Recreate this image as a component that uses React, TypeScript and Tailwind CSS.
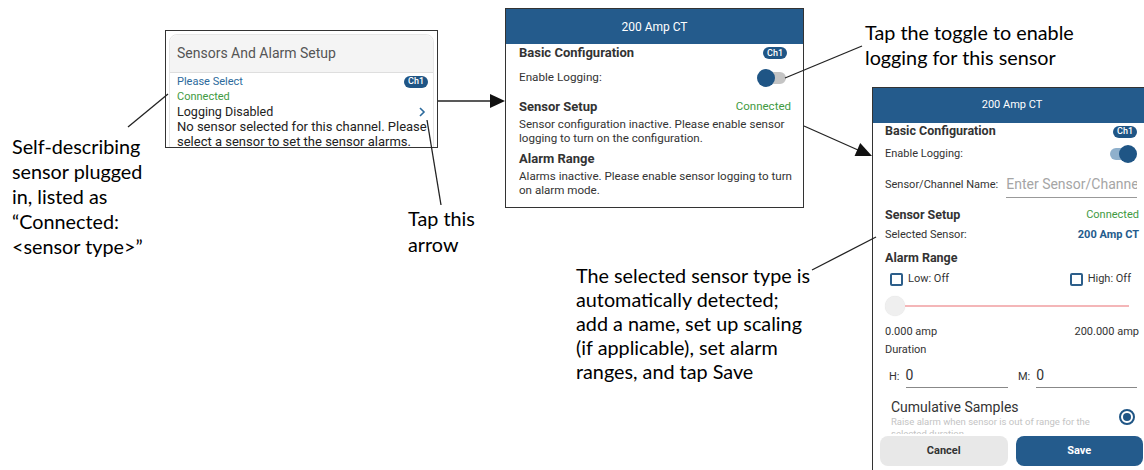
import React from 'react';

const APP = '[font-family:Roboto,sans-serif]';
const NOTE = '[font-family:Lato,sans-serif] text-[19.8px] text-black whitespace-nowrap';

const Ch1 = () => (
  <span className="flex h-[12px] w-[24px] items-center justify-center rounded-full bg-[#1f5585] text-[9px] font-medium leading-none text-white">
    Ch1
  </span>
);

const Toggle = ({ on }: { on: boolean }) => (
  <div className="relative h-[18px] w-[30px]">
    <div
      className={`absolute left-[3px] top-[3px] h-[12px] w-[26px] rounded-full ${
        on ? 'bg-[#8fb0cc]' : 'bg-[#c4c4c4]'
      }`}
    />
    <div
      className={`absolute top-0 h-[18px] w-[18px] rounded-full bg-[#1f5585] ${
        on ? 'right-0' : 'left-0'
      }`}
    />
  </div>
);

const Checkbox = ({ label }: { label: string }) => (
  <div className="flex items-center gap-[5px]">
    <span className="h-[13px] w-[13px] rounded-[2px] border-2 border-[#2c5e8a] bg-white" />
    <span className="text-[11px] text-[#333]">{label}</span>
  </div>
);

const SetupPanel = () => (
  <div className={`absolute left-[165px] top-[30px] h-[118px] w-[273px] overflow-hidden border border-[#333] bg-white ${APP}`}>
    <div className="mx-[3px] mt-[3px] h-[120px] rounded-lg border border-[#e6e6e6]">
      <div className="flex h-[38px] items-center rounded-t-lg border-b border-[#dedede] bg-[#f4f4f4] pl-[7px] text-[14px] text-[#555]">
        Sensors And Alarm Setup
      </div>
      <div className="whitespace-nowrap pl-[7px] pr-[5px] pt-[1px] leading-[15px]">
        <div className="flex h-[15px] items-center justify-between">
          <span className="text-[11px] text-[#2c6a9c]">Please Select</span>
          <Ch1 />
        </div>
        <div className="text-[11px] text-[#3f9a3f]">Connected</div>
        <div className="flex items-center justify-between text-[12.5px] text-[#222]">
          <span>Logging Disabled</span>
          <svg width="8" height="10" viewBox="0 0 8 10" className="mr-[2px]">
            <path d="M2 1 L6 5 L2 9" fill="none" stroke="#2c6a9c" strokeWidth="1.6" />
          </svg>
        </div>
        <div className="text-[13px] text-[#222]">
          No sensor selected for this channel. Please
          <br />
          select a sensor to set the sensor alarms.
        </div>
      </div>
    </div>
  </div>
);

const InactivePanel = () => (
  <div className={`absolute left-[505px] top-[8px] h-[200px] w-[299px] overflow-hidden border border-[#333] bg-white ${APP}`}>
    <div className="flex h-[35px] items-center justify-center bg-[#245b8c] text-[12px] text-white">
      200 Amp CT
    </div>
    <div className="whitespace-nowrap pl-[13px] pr-[16px] text-[#333]">
      <div className="flex h-[18px] items-center justify-between">
        <span className="text-[13px] font-bold">Basic Configuration</span>
        <Ch1 />
      </div>
      <div className="mt-[6px] flex h-[20px] items-center justify-between">
        <span className="text-[11.7px]">Enable Logging:</span>
        <Toggle on={false} />
      </div>
      <div className="mt-[10px] flex h-[18px] items-center justify-between">
        <span className="text-[13px] font-bold">Sensor Setup</span>
        <span className="-mr-[4px] text-[11.5px] text-[#3f9a3f]">Connected</span>
      </div>
      <div className="mt-[1px] text-[11.6px] leading-[14px]">
        Sensor configuration inactive. Please enable sensor
        <br />
        logging to turn on the configuration.
      </div>
      <div className="mt-[5px] flex h-[18px] items-center text-[13px] font-bold">Alarm Range</div>
      <div className="mt-[1px] text-[11.6px] leading-[14px]">
        Alarms inactive. Please enable sensor logging to turn
        <br />
        on alarm mode.
      </div>
    </div>
  </div>
);

const ConfigPanel = () => (
  <div className={`absolute left-[872px] top-[87px] h-[390px] w-[280px] overflow-hidden border border-[#333] bg-white ${APP}`}>
    <div className="flex h-[35px] items-center justify-center bg-[#245b8c] text-[11px] text-white">
      200 Amp CT
    </div>
    <div className="pl-[12px] pr-[14px] text-[#333]">
      <div className="flex h-[17px] items-center justify-between">
        <span className="text-[12.5px] font-bold">Basic Configuration</span>
        <Ch1 />
      </div>
      <div className="mt-[4px] flex h-[20px] items-center justify-between">
        <span className="text-[11px]">Enable Logging:</span>
        <Toggle on />
      </div>
      <div className="mt-[8px] flex h-[26px] items-center gap-[8px]">
        <span className="text-[11px]">Sensor/Channel Name:</span>
        <div className="flex h-[26px] min-w-0 flex-1 items-center overflow-hidden whitespace-nowrap border-b border-[#999] text-[14px] text-[#a5a5a5]">
          Enter Sensor/Channel Name
        </div>
      </div>
      <div className="mt-[9px] flex h-[16px] items-center justify-between">
        <span className="text-[12.5px] font-bold">Sensor Setup</span>
        <span className="-mr-[2px] text-[11px] text-[#3f9a3f]">Connected</span>
      </div>
      <div className="mt-[4px] flex h-[16px] items-center justify-between">
        <span className="text-[11px]">Selected Sensor:</span>
        <span className="-mr-[2px] text-[11px] font-bold text-[#245b8c]">200 Amp CT</span>
      </div>
      <div className="mt-[7px] flex h-[16px] items-center text-[12.5px] font-bold">Alarm Range</div>
      <div className="mt-[5px] flex h-[16px] items-center justify-between pl-[5px] pr-[6px]">
        <Checkbox label="Low: Off" />
        <Checkbox label="High: Off" />
      </div>
      <div className="mt-[9px] flex h-[20px] items-center pr-[8px]">
        <span className="h-[20px] w-[20px] rounded-full bg-[#efefef] shadow-[0_0_1px_rgba(0,0,0,0.15)]" />
        <span className="h-[2px] flex-1 bg-[#f4b6b8]" />
      </div>
      <div className="mt-[8px] flex h-[16px] items-center justify-between text-[11px]">
        <span>0.000 amp</span>
        <span className="-mr-[2px]">200.000 amp</span>
      </div>
      <div className="mt-[2px] flex h-[16px] items-center text-[11px]">Duration</div>
      <div className="mt-[7px] flex h-[23px] items-end gap-[10px] pl-[4px]">
        <div className="flex flex-1 items-end gap-[6px]">
          <span className="pb-[3px] text-[11px]">H:</span>
          <div className="flex-1 border-b border-[#888] pb-[1px] text-[14px]">0</div>
        </div>
        <div className="flex flex-1 items-end gap-[6px]">
          <span className="pb-[3px] text-[11px]">M:</span>
          <div className="flex-1 border-b border-[#888] pb-[1px] text-[14px]">0</div>
        </div>
      </div>
      <div className="mt-[11px] flex items-center justify-between pl-[6px]">
        <div className="flex flex-col">
          <span className="text-[14px] leading-[17px] text-[#333]">Cumulative Samples</span>
          <span className="h-[18px] overflow-hidden text-[9.5px] leading-[12px] text-[#c4c4c4]">
            Raise alarm when sensor is out of range for the
            <br />
            selected duration
          </span>
        </div>
        <span className="mr-[2px] flex h-[16px] w-[16px] items-center justify-center rounded-full border-2 border-[#1f5585]">
          <span className="h-[8px] w-[8px] rounded-full bg-[#1f5585]" />
        </span>
      </div>
    </div>
    <div className="mt-[2px] flex gap-[8px] pl-[7px] pr-[8px]">
      <button className="h-[30px] w-[128px] rounded-lg bg-[#e8e8e8] text-[11px] font-bold text-[#333]">
        Cancel
      </button>
      <button className="h-[30px] w-[128px] rounded-lg bg-[#245b8c] text-[11px] font-bold text-white">
        Save
      </button>
    </div>
  </div>
);

export default function App() {
  return (
    <div className="relative h-[470px] w-[1144px] overflow-hidden bg-white">
      <SetupPanel />
      <InactivePanel />
      <ConfigPanel />

      <div className={`absolute left-[12px] top-[134px] leading-[25px] ${NOTE}`}>
        Self-describing
        <br />
        sensor plugged
        <br />
        in, listed as
        <br />
        “Connected:
        <br />
        &lt;sensor type&gt;”
      </div>
      <div className={`absolute left-[408px] top-[205px] leading-[26px] ${NOTE}`}>
        Tap this
        <br />
        arrow
      </div>
      <div className={`absolute left-[865px] top-[20px] leading-[25px] ${NOTE}`}>
        Tap the toggle to enable
        <br />
        logging for this sensor
      </div>
      <div className={`absolute left-[576px] top-[263px] leading-[24px] ${NOTE}`}>
        The selected sensor type is
        <br />
        automatically detected;
        <br />
        add a name, set up scaling
        <br />
        (if applicable), set alarm
        <br />
        ranges, and tap Save
      </div>

      <svg className="pointer-events-none absolute left-0 top-0" width="1144" height="470">
        <g stroke="#222" strokeWidth="1.3" fill="none">
          <line x1="438" y1="101" x2="492" y2="101" />
          <line x1="804" y1="126" x2="858" y2="150" />
          <line x1="128" y1="127" x2="168" y2="94" />
          <line x1="427" y1="120" x2="441" y2="205" />
          <line x1="785" y1="78" x2="862" y2="46" />
          <line x1="812" y1="270" x2="876" y2="237" />
        </g>
        <polygon points="490,94 505,101 490,108" fill="#111" />
        <polygon points="860.2,143.1 872,156 854.6,155.9" fill="#111" />
      </svg>
    </div>
  );
}
